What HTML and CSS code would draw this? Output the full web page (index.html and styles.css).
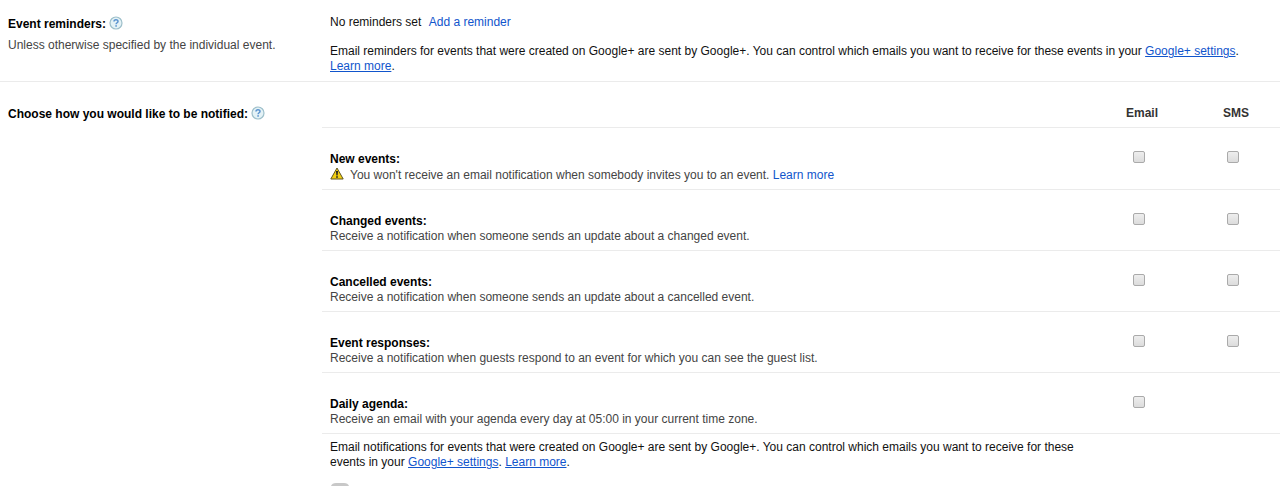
FILE: index.html
```
<!DOCTYPE html>
<html lang="en">
<head>
  <meta charset="UTF-8" />
  <meta name="viewport" content="width=device-width, initial-scale=1.0" />
  <title>Calendar notifications</title>
  <link rel="stylesheet" href="styles.css">
</head>
<body>

<svg class="symbols" aria-hidden="true">
  <symbol id="help" viewBox="0 0 14 14">
    <circle cx="7" cy="7" r="6" fill="#e4f2f6" stroke="#9dbfca" stroke-width="1.2" />
    <path d="M5 5.6C5 3.2 9 3.2 9 5.4C9 6.8 7.1 6.7 7.1 8.3" fill="none" stroke="#5b93cf" stroke-width="1.5" />
    <rect x="6.3" y="9.2" width="1.6" height="1.5" fill="#5b93cf" />
  </symbol>
</svg>

<section class="setting">
  <div class="setting-label">
    <h2>Event reminders: <a href="#" aria-label="Help"><svg class="help-icon"><use href="#help" /></svg></a></h2>
    <p class="hint">Unless otherwise specified by the individual event.</p>
  </div>
  <div class="setting-body">
    <p class="reminders">No reminders set <a class="add" href="#">Add a reminder</a></p>
    <p>Email reminders for events that were created on Google+ are sent by Google+. You can control which emails you want to receive for these events in your <a class="underlined" href="#">Google+ settings</a>. <a class="underlined" href="#">Learn more</a>.</p>
  </div>
</section>

<section class="setting notify">
  <div class="setting-label">
    <h2>Choose how you would like to be notified: <a href="#" aria-label="Help"><svg class="help-icon"><use href="#help" /></svg></a></h2>
  </div>
  <div>
    <table class="notifications">
      <thead>
        <tr>
          <td></td>
          <th class="method" scope="col">Email</th>
          <th class="method" scope="col">SMS</th>
        </tr>
      </thead>
      <tbody>
        <tr>
          <td>
            <h3>New events:</h3>
            <p class="hint"><svg class="warning-icon" viewBox="0 0 14 13"><path d="M7 1L13.2 12H0.8Z" fill="#f3cf12" stroke="#5e5520" stroke-linejoin="round" /><path d="M6 4H8L7.6 8.4H6.4Z" fill="#222" /><rect x="6.2" y="9.2" width="1.6" height="1.6" fill="#222" /></svg>You won't receive an email notification when somebody invites you to an event. <a href="#">Learn more</a></p>
          </td>
          <td class="check"><input type="checkbox" aria-label="New events by email"></td>
          <td class="check"><input type="checkbox" aria-label="New events by SMS"></td>
        </tr>
        <tr>
          <td>
            <h3>Changed events:</h3>
            <p class="hint">Receive a notification when someone sends an update about a changed event.</p>
          </td>
          <td class="check"><input type="checkbox" aria-label="Changed events by email"></td>
          <td class="check"><input type="checkbox" aria-label="Changed events by SMS"></td>
        </tr>
        <tr>
          <td>
            <h3>Cancelled events:</h3>
            <p class="hint">Receive a notification when someone sends an update about a cancelled event.</p>
          </td>
          <td class="check"><input type="checkbox" aria-label="Cancelled events by email"></td>
          <td class="check"><input type="checkbox" aria-label="Cancelled events by SMS"></td>
        </tr>
        <tr>
          <td>
            <h3>Event responses:</h3>
            <p class="hint">Receive a notification when guests respond to an event for which you can see the guest list.</p>
          </td>
          <td class="check"><input type="checkbox" aria-label="Event responses by email"></td>
          <td class="check"><input type="checkbox" aria-label="Event responses by SMS"></td>
        </tr>
        <tr>
          <td>
            <h3>Daily agenda:</h3>
            <p class="hint">Receive an email with your agenda every day at 05:00 in your current time zone.</p>
          </td>
          <td class="check"><input type="checkbox" aria-label="Daily agenda by email"></td>
          <td></td>
        </tr>
      </tbody>
    </table>
    <div class="footnote">
      <p>Email notifications for events that were created on Google+ are sent by Google+. You can control which emails you want to receive for these events in your <a class="underlined" href="#">Google+ settings</a>. <a class="underlined" href="#">Learn more</a>.</p>
      <svg class="phone-icon" viewBox="0 0 20 3"><path d="M1 3Q2 0 6 0H14Q18 0 19 3Z" fill="#c8c8c8" /></svg>
    </div>
  </div>
</section>

</body>
</html>
```
FILE: styles.css
```
* {
  box-sizing: border-box;
}

body {
  margin: 0;
  font-family: "Liberation Sans", Arial, sans-serif;
  font-size: 12px;
  line-height: 15px;
  color: #111;
  background: #fff;
}

h2,
h3,
p {
  margin: 0;
  font-size: 12px;
}

h2,
h3 {
  color: #000;
}

a {
  color: #15c;
  text-decoration: none;
}

.underlined {
  text-decoration: underline;
}

.symbols {
  display: none;
}

.setting {
  display: grid;
  grid-template-columns: 322px 1fr;
  border-bottom: 1px solid #ebebeb;
}

.setting-label {
  padding: 16px 8px 0;
}

.setting-label h2 {
  margin-bottom: 6px;
}

.setting-body {
  padding: 15px 8px 7px;
}

.reminders {
  margin-bottom: 14px;
}

.add {
  margin-left: 4px;
}

.hint {
  color: #444;
}

.help-icon {
  width: 14px;
  height: 14px;
  vertical-align: -2px;
}

.notify {
  border-bottom: none;
}

.notify .setting-label {
  padding-top: 24px;
}

.notifications {
  width: 100%;
  table-layout: fixed;
  border-collapse: separate;
  border-spacing: 0;
}

.notifications th,
.notifications td {
  padding: 24px 8px 6px;
  text-align: left;
  vertical-align: top;
  border-bottom: 1px solid #ebebeb;
}

.notifications .method {
  width: 94px;
  padding: 24px 0 6px 6px;
  text-align: center;
  color: #333;
}

.notifications .check {
  padding: 23px 0 0;
  text-align: center;
}

.check input {
  appearance: none;
  display: block;
  width: 12px;
  height: 12px;
  margin: 0 auto;
  border: 1px solid #aaa;
  border-radius: 2px;
  background: linear-gradient(#eee, #dcdcdc);
}

.warning-icon {
  width: 14px;
  height: 13px;
  margin-right: 6px;
  vertical-align: -1px;
}

.footnote {
  margin-right: 188px;
  padding: 6px 8px 0;
}

.phone-icon {
  display: block;
  width: 20px;
  height: 3px;
  margin-top: 13px;
}
```
